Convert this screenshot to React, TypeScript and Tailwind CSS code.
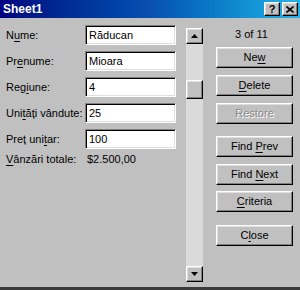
import React from 'react';

const fields = [
  { pre: 'N', key: 'u', post: 'me:', value: 'Răducan' },
  { pre: 'Pr', key: 'e', post: 'nume:', value: 'Mioara' },
  { pre: 'Reg', key: 'i', post: 'une:', value: '4' },
  { pre: 'Uni', key: 't', post: 'ăți vândute:', value: '25' },
  { pre: 'Preț uni', key: 't', post: 'ar:', value: '100' },
];

const raised =
  'bg-[#c0c0c0] border border-t-white border-l-white border-b-black border-r-black shadow-[inset_-1px_-1px_0_#808080,inset_1px_1px_0_#dfdfdf]';

function Btn({ pre, k, post, disabled, className }: { pre: string; k: string; post: string; disabled?: boolean; className?: string }) {
  return (
    <div className={`${raised} h-[21px] flex items-center justify-center ${className ?? ''}`}>
      <span className={disabled ? 'text-[#8a8a8a] [text-shadow:1px_1px_0_#fff]' : 'text-black'}>
        {pre}
        <span className={disabled ? '' : 'underline underline-offset-2'}>{k}</span>
        {post}
      </span>
    </div>
  );
}

function Arrow({ up }: { up?: boolean }) {
  return (
    <div className={`${raised} w-[17px] h-[16px] flex items-center justify-center`}>
      <svg width="7" height="4" viewBox="0 0 7 4">
        <path d={up ? 'M3.5 0 L7 4 L0 4 Z' : 'M0 0 L7 0 L3.5 4 Z'} fill="#000" />
      </svg>
    </div>
  );
}

export default function App() {
  return (
    <div className="w-[300px] h-[290px] bg-[#c0c0c0] border-b-[3px] border-b-[#3a3a3a] flex flex-col overflow-hidden font-['Liberation_Sans',Arial,sans-serif] text-[11px] text-black">
      {/* title bar */}
      <div className="h-[18px] shrink-0 bg-linear-to-r from-[#000080] via-[#0a50b0] to-[#22b4e6] flex items-center pl-[3px] pr-[2px]">
        <span className="text-white font-bold text-[12px] leading-none">Sheet1</span>
        <div className="ml-auto flex items-center gap-[2px]">
          <div className={`${raised} w-[16px] h-[14px] flex items-center justify-center font-bold text-[11px] leading-none`}>?</div>
          <div className={`${raised} w-[16px] h-[14px] flex items-center justify-center`}>
            <svg width="8" height="7" viewBox="0 0 8 7">
              <path d="M0.5 0.5 L7.5 6.5 M7.5 0.5 L0.5 6.5" stroke="#000" strokeWidth="1.6" />
            </svg>
          </div>
        </div>
      </div>

      <div className="flex flex-1 min-h-0">
        {/* fields */}
        <div className="w-[186px] shrink-0 pt-[7px] flex flex-col">
          <div className="flex flex-col gap-[6px]">
            {fields.map((f) => (
              <div key={f.value} className="flex items-center h-[20px]">
                <span className="w-[85px] pl-[6px] shrink-0 whitespace-nowrap">
                  {f.pre}
                  <span className="underline underline-offset-2">{f.key}</span>
                  {f.post}
                </span>
                <div className="w-[91px] h-[20px] bg-white border border-t-[#808080] border-l-[#808080] border-b-white border-r-white shadow-[inset_1px_1px_0_#000,inset_-1px_-1px_0_#dfdfdf] flex items-center pl-[3px]">
                  {f.value}
                </div>
              </div>
            ))}
          </div>
          <div className="flex items-center h-[14px] mt-[3px]">
            <span className="w-[85px] pl-[6px] shrink-0 whitespace-nowrap">
              <span className="underline underline-offset-2">V</span>ânzări totale:
            </span>
            <span className="pl-[2px]">$2.500,00</span>
          </div>
        </div>

        {/* scrollbar */}
        <div className="w-[17px] shrink-0 mt-[10px] mb-[5px] flex flex-col bg-[#dadada]">
          <Arrow up />
          <div className="flex-1 pt-[36px]">
            <div className={`${raised} w-[17px] h-[19px]`} />
          </div>
          <Arrow />
        </div>

        {/* buttons */}
        <div className="w-[77px] ml-[13px] shrink-0 flex flex-col">
          <div className="h-[29px] flex items-center justify-center pt-[4px] pr-[6px]">3 of 11</div>
          <Btn pre="Ne" k="w" post="" />
          <Btn pre="" k="D" post="elete" className="mt-[7px]" />
          <Btn pre="Restore" k="" post="" disabled className="mt-[7px]" />
          <Btn pre="Find " k="P" post="rev" className="mt-[12px]" />
          <Btn pre="Find " k="N" post="ext" className="mt-[7px]" />
          <Btn pre="" k="C" post="riteria" className="mt-[6px]" />
          <Btn pre="C" k="l" post="ose" className="mt-[13px]" />
        </div>
      </div>
    </div>
  );
}
